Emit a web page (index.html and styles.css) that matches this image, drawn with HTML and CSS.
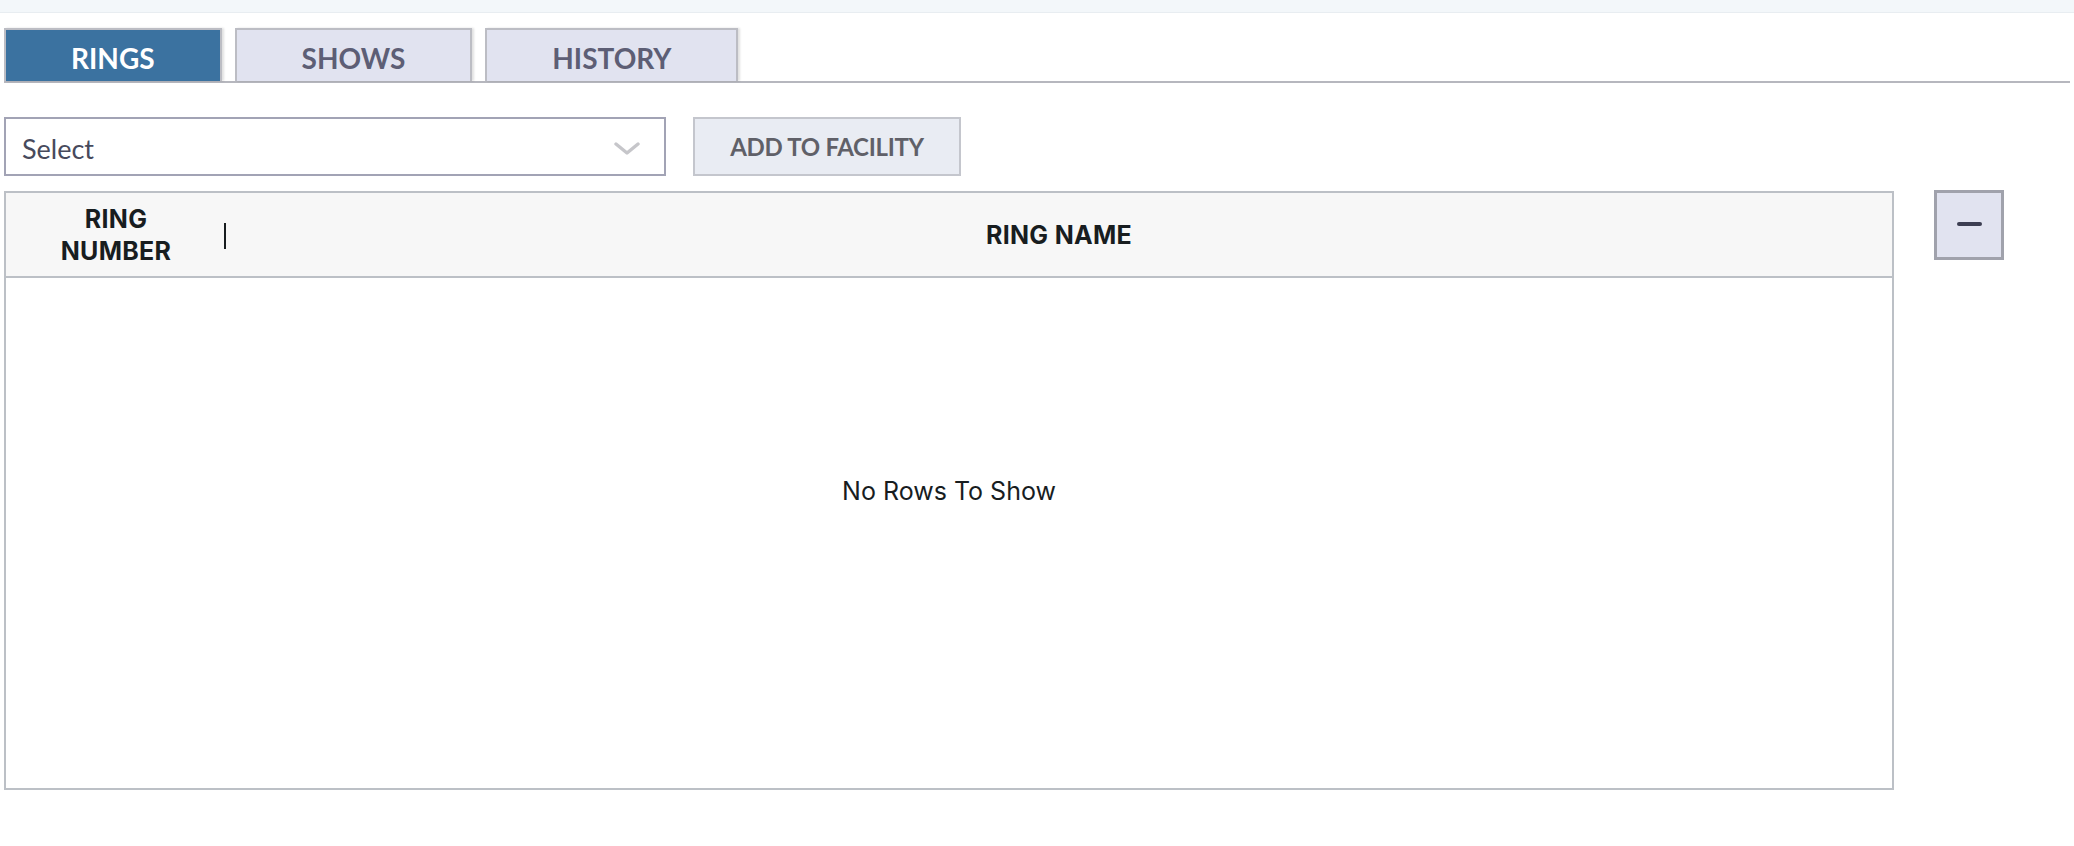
FILE: index.html
```html
<!DOCTYPE html>
<html>
<head>
<meta charset="utf-8">
<link rel="stylesheet" href="styles.css">
</head>
<body>
<div class="topbar"></div>
<div class="tabs">
  <div class="tab active">RINGS</div>
  <div class="tab">SHOWS</div>
  <div class="tab">HISTORY</div>
</div>
<div class="controls">
  <div class="select">
    <span class="select-text">Select</span>
    <svg class="chev" width="26" height="14" viewBox="0 0 26 14"><path d="M2 2 L13 11 L24 2" fill="none" stroke="#c6c6ca" stroke-width="3.4" stroke-linecap="round" stroke-linejoin="round"/></svg>
  </div>
  <button class="add-btn">ADD TO FACILITY</button>
</div>
<div class="main">
  <div class="grid">
    <div class="grid-header">
      <div class="col col-num">RING<br>NUMBER<span class="resize"></span></div>
      <div class="col col-name">RING NAME</div>
    </div>
    <div class="grid-body">
      <span class="overlay">No Rows To Show</span>
    </div>
  </div>
  <button class="minus-btn"><span class="minus"></span></button>
</div>
</body>
</html>
```

FILE: styles.css
```css
html, body {
  margin: 0;
  padding: 0;
  background: #ffffff;
}
body {
  font-family: Lato, "Liberation Sans", sans-serif;
}
.topbar {
  height: 12px;
  background: #f3f7fa;
  border-bottom: 1px solid #e8edf1;
}
.tabs {
  display: flex;
  gap: 13px;
  margin: 14px 4px 0 4px;
  border-bottom: 2px solid #b6b7be;
  height: 54px;
  align-items: flex-end;
}
.tab {
  height: 53px;
  box-sizing: border-box;
  padding: 4px 65px 0 65px;
  display: flex;
  align-items: center;
  justify-content: center;
  font-size: 28px;
  font-weight: 700;
  color: #5d5e75;
  background: #e1e3f0;
  border: 2px solid #bcbdc4;
  border-bottom: none;
  box-shadow: 2px 0 2px rgba(0, 0, 0, 0.12);
}
.tab.active {
  background: #3b72a0;
  color: #ffffff;
}
.controls {
  display: flex;
  gap: 27px;
  margin: 34px 0 0 4px;
  height: 59px;
}
.select {
  width: 662px;
  box-sizing: border-box;
  border: 2px solid #a2a3b5;
  display: flex;
  align-items: center;
  justify-content: space-between;
  padding: 0 24px 0 16px;
}
.select-text {
  font-size: 27px;
  color: #474a5c;
  padding-top: 4px;
}
.chev {
  display: block;
  margin-top: 4px;
}
.add-btn {
  width: 268px;
  box-sizing: border-box;
  background: #e9ecf3;
  border: 2px solid #c4c6cd;
  font-family: Lato, "Liberation Sans", sans-serif;
  font-size: 24px;
  font-weight: 700;
  color: #606068;
  padding: 0;
  letter-spacing: -0.3px;
}
.main {
  display: flex;
  gap: 40px;
  margin: 15px 0 0 4px;
  align-items: flex-start;
}
.grid {
  width: 1890px;
  height: 599px;
  box-sizing: border-box;
  border: 2px solid #bcc0c6;
  display: flex;
  flex-direction: column;
  font-family: Inter, "Liberation Sans", sans-serif;
}
.grid-header {
  height: 85px;
  flex: none;
  box-sizing: border-box;
  background: #f7f7f7;
  border-bottom: 2px solid #bcc0c6;
  display: flex;
  align-items: center;
}
.col {
  font-size: 25px;
  font-weight: 700;
  color: #181d1f;
  text-align: center;
  letter-spacing: 0.3px;
}
.col-num {
  width: 220px;
  line-height: 32px;
  position: relative;
  flex: none;
}
.resize {
  position: absolute;
  right: 0;
  top: 20px;
  width: 2px;
  height: 26px;
  background: #181d1f;
}
.col-name {
  flex: 1;
}
.grid-body {
  flex: 1;
  display: flex;
  align-items: center;
  justify-content: center;
  padding-bottom: 85px;
}
.overlay {
  font-size: 25px;
  color: #181d1f;
}
.minus-btn {
  width: 70px;
  height: 70px;
  box-sizing: border-box;
  background: #e1e3f0;
  border: 3px solid #a0a2ac;
  display: flex;
  align-items: center;
  justify-content: center;
  padding: 0;
  margin-top: -1px;
}
.minus {
  display: block;
  width: 25px;
  height: 4px;
  border-radius: 2px;
  background: #3c3e52;
  margin-top: -3px;
}
```
